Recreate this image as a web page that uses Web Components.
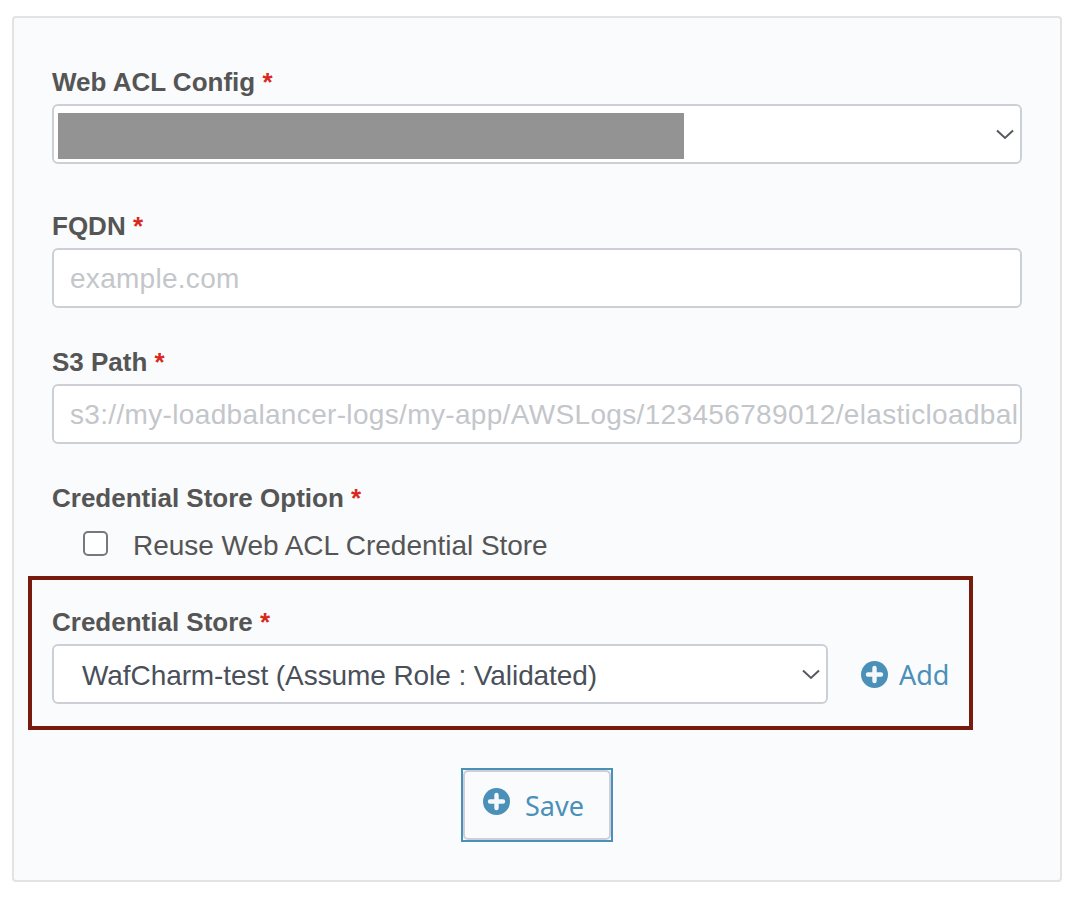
<!DOCTYPE html>
<html><head><meta charset="utf-8">
<style>
html,body{margin:0;padding:0;background:#fff}
body{font-family:"Liberation Sans",Arial,sans-serif;height:898px;overflow:hidden}
</style></head><body>
<template id="t-panel"><style>
:host{display:block;box-sizing:border-box;width:1050px;height:866px;margin:16px 0 0 12px;padding:42px 38px 38px;background:#fafbfd;border:2px solid #e3e3e3;border-radius:4px}
</style><slot></slot></template>

<template id="t-field"><style>
:host{display:block}
.l{height:44px;font:bold 26px/44px "Liberation Sans",Arial,sans-serif;color:#555;white-space:nowrap}
.s{color:#d9291c}
</style><div class="l"><span id="lab"></span> <span class="s">*</span></div><slot></slot></template>

<template id="t-box"><style>
:host{display:flex;align-items:center;box-sizing:border-box;height:60px;width:100%;background:#fff;border:2px solid #ccd0d6;border-radius:6px;font:28px "Liberation Sans",Arial,sans-serif;overflow:hidden;white-space:nowrap;position:relative}
:host([ph]){color:#c3c6ca;padding-left:16px;padding-top:2px}
svg{position:absolute;right:6px;top:23px}
</style><slot></slot><svg id="c" width="18" height="11" viewBox="0 0 18 11" fill="none" stroke="#55585e" stroke-width="2"><path d="M1 1.5l8 7.5 8-7.5"/></svg></template>

<template id="t-check"><style>
:host{display:flex;align-items:center;height:50px;padding-left:30.5px;font:28px "Liberation Sans",Arial,sans-serif;color:#555;white-space:nowrap;letter-spacing:-.03px}
i{display:block;box-sizing:border-box;width:25px;height:25px;border:2px solid #75797e;border-radius:5px;background:#fff;margin:-4px 25.5px 0 0}
span{padding-top:2px}
</style><i></i><span><slot></slot></span></template>

<template id="t-hl"><style>
:host{display:block;box-sizing:border-box;width:945px;height:154px;margin:6px 0 0 -24px;padding:20px 20px 22px;border:4px solid #761b0e}
</style><slot></slot></template>

<template id="t-row"><style>
:host{display:flex;align-items:center;gap:33px}
::slotted(w-box){width:776px;flex:none}
</style><slot></slot></template>

<template id="t-add"><style>
:host{display:inline-flex;align-items:center;gap:11px;color:#4a90b8;font:27px "Noto Sans","Open Sans",sans-serif}
</style><w-plus></w-plus><slot></slot></template>

<template id="t-plus"><style>
:host{display:block;width:27px;height:27px}
svg{display:block}
</style><svg width="27" height="27" viewBox="0 0 27 27"><circle cx="13.5" cy="13.5" r="13.5" fill="#4a90b8"/><path d="M13.5 7v13M7 13.5h13" stroke="#f4f8fb" stroke-width="4.4" stroke-linecap="round"/></svg></template>

<template id="t-save"><style>
:host{display:block;box-sizing:border-box;width:152px;height:74px;margin:38px auto 0;border:2px solid #4a90b8;background:#fafbfd}
div{box-sizing:border-box;height:100%;border:2px solid #ccd0d6;border-radius:5px;display:flex;align-items:center;justify-content:center;gap:15px;padding-right:7px;color:#4a90b8;font:27px "Noto Sans","Open Sans",sans-serif}
w-plus{position:relative;top:-4px}
</style><div><w-plus></w-plus><slot></slot></div></template>

<w-panel>
  <w-field label="Web ACL Config">
    <w-box sel><span style="display:block;width:626px;height:46px;background:#939393;margin:4px 0 0 4px"></span></w-box>
  </w-field>
  <w-field label="FQDN" style="margin-top:40px"><w-box ph style="letter-spacing:.28px">example.com</w-box></w-field>
  <w-field label="S3 Path" style="margin-top:32px"><w-box ph style="letter-spacing:.34px">s3://my-loadbalancer-logs/my-app/AWSLogs/123456789012/elasticloadbal</w-box></w-field>
  <w-field label="Credential Store Option" style="margin-top:32px"><w-check>Reuse Web ACL Credential Store</w-check></w-field>
  <w-hl>
    <w-field label="Credential Store">
      <w-row>
        <w-box sel style="color:#49505a"><span style="padding:4px 0 0 28px;letter-spacing:-.08px">WafCharm-test (Assume Role : Validated)</span></w-box>
        <w-add>Add</w-add>
      </w-row>
    </w-field>
  </w-hl>
  <w-save>Save</w-save>
</w-panel>
<script>
function def(name,tid,after){
  customElements.define(name,class extends HTMLElement{
    constructor(){super();const r=this.attachShadow({mode:'open'});r.appendChild(document.getElementById(tid).content.cloneNode(true));}
    connectedCallback(){if(after)after(this);}
  });
}
def('w-plus','t-plus');
def('w-panel','t-panel');
def('w-field','t-field',e=>{e.shadowRoot.getElementById('lab').textContent=e.getAttribute('label');});
def('w-box','t-box',e=>{if(!e.hasAttribute('sel'))e.shadowRoot.getElementById('c').remove();});
def('w-check','t-check');
def('w-hl','t-hl');
def('w-row','t-row');
def('w-add','t-add');
def('w-save','t-save');
</script>
</body></html>
